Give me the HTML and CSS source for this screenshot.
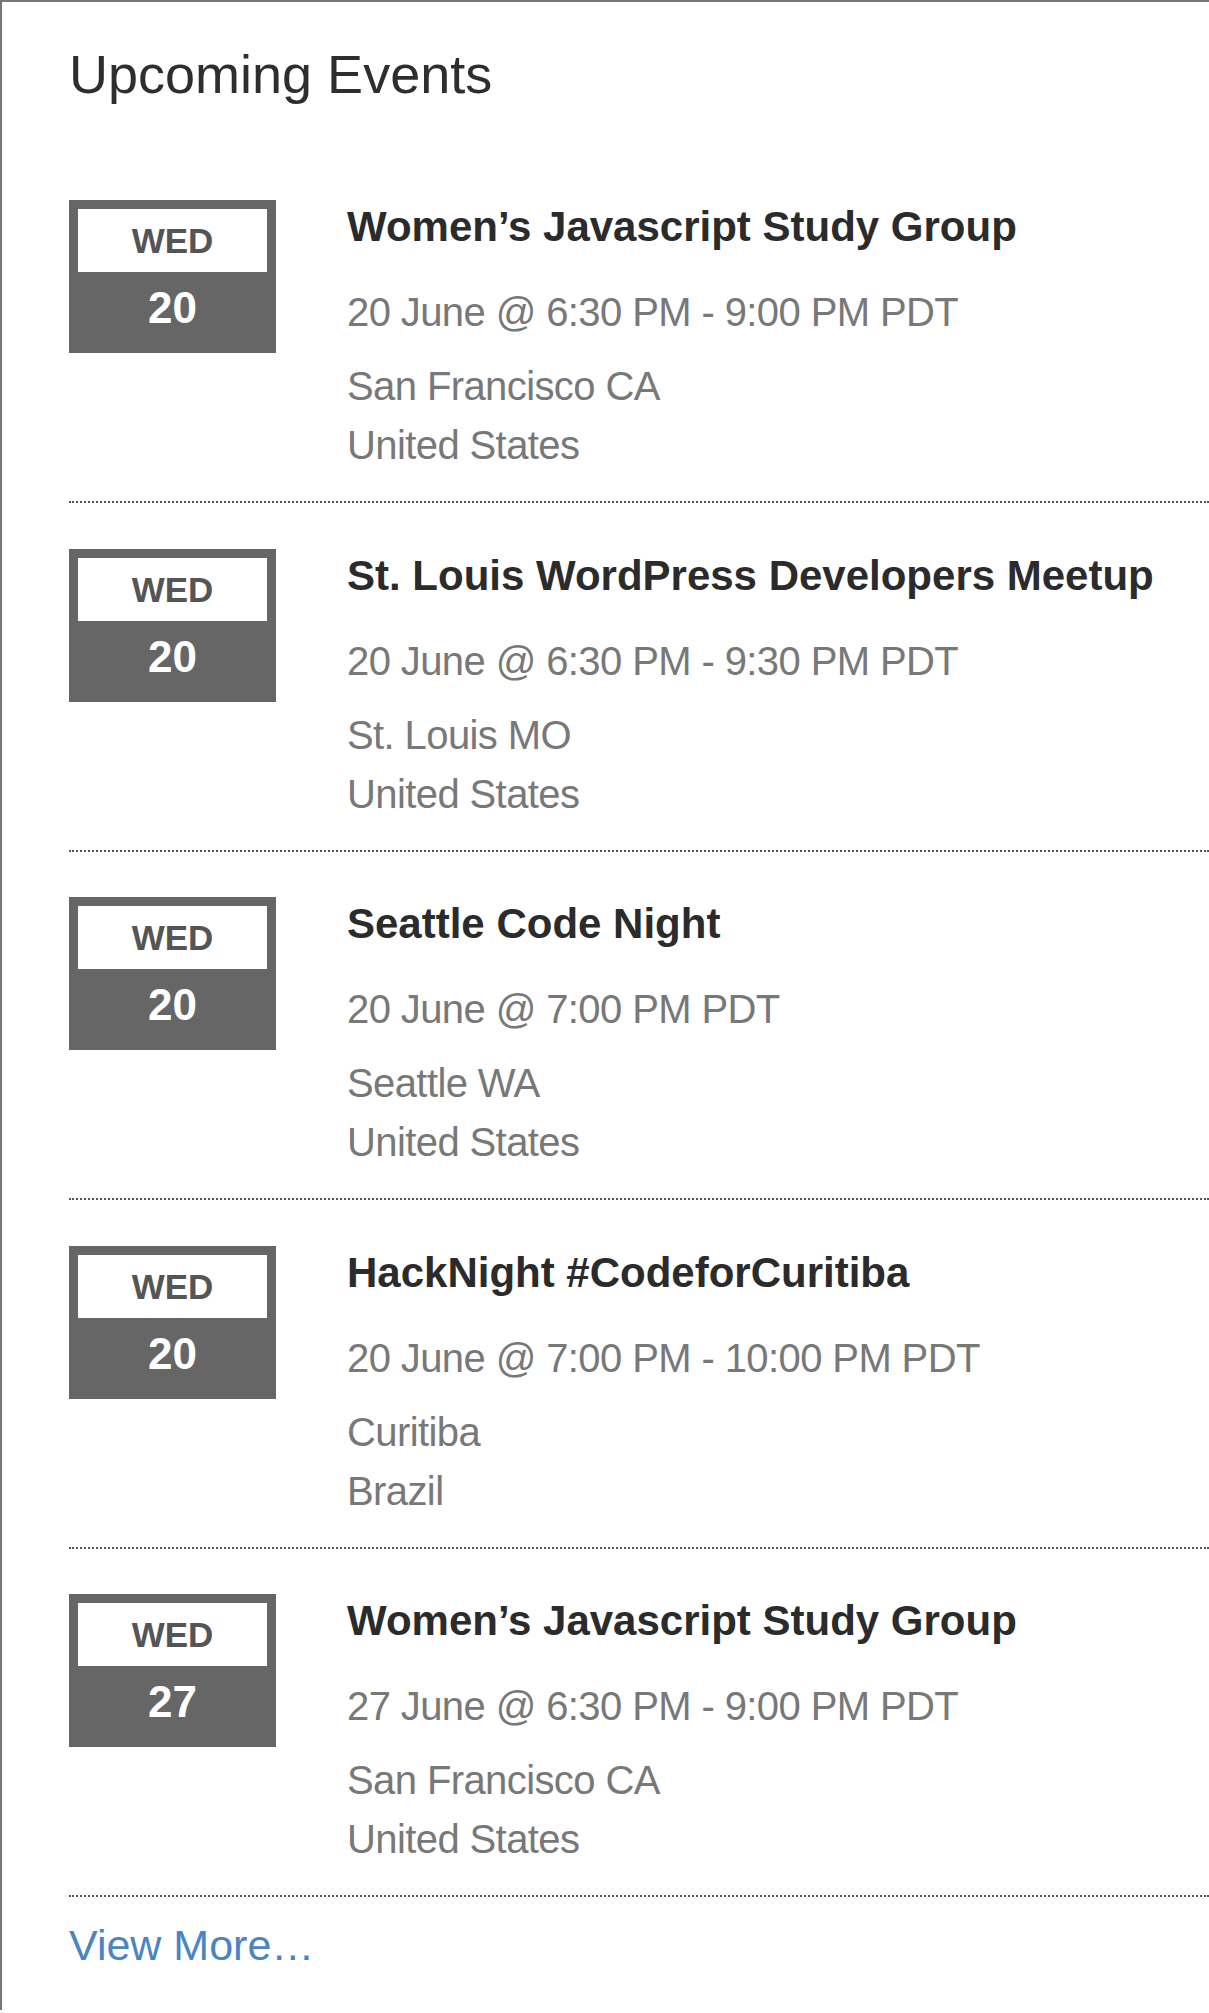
FILE: index.html
```
<!DOCTYPE html>
<html lang="en">
<head>
  <meta charset="UTF-8" />
  <meta name="viewport" content="width=device-width, initial-scale=1.0"/>
  <title>upcoming events</title>
  <link rel="stylesheet" href="styles.css">
</head>
<body>
  <section class="events-widget">
    <h2>Upcoming Events</h2>

    <ul class="event-list">
      <li class="event">
        <div class="event-date">
          <span class="weekday">WED</span>
          <span class="day">20</span>
        </div>
        <div class="event-info">
          <h3>Women’s Javascript Study Group</h3>
          <p class="event-time">20 June @ 6:30 PM - 9:00 PM PDT</p>
          <p class="event-place">San Francisco CA<br>United States</p>
        </div>
      </li>

      <li class="event">
        <div class="event-date">
          <span class="weekday">WED</span>
          <span class="day">20</span>
        </div>
        <div class="event-info">
          <h3>St. Louis WordPress Developers Meetup</h3>
          <p class="event-time">20 June @ 6:30 PM - 9:30 PM PDT</p>
          <p class="event-place">St. Louis MO<br>United States</p>
        </div>
      </li>

      <li class="event">
        <div class="event-date">
          <span class="weekday">WED</span>
          <span class="day">20</span>
        </div>
        <div class="event-info">
          <h3>Seattle Code Night</h3>
          <p class="event-time">20 June @ 7:00 PM PDT</p>
          <p class="event-place">Seattle WA<br>United States</p>
        </div>
      </li>

      <li class="event">
        <div class="event-date">
          <span class="weekday">WED</span>
          <span class="day">20</span>
        </div>
        <div class="event-info">
          <h3>HackNight #CodeforCuritiba</h3>
          <p class="event-time">20 June @ 7:00 PM - 10:00 PM PDT</p>
          <p class="event-place">Curitiba<br>Brazil</p>
        </div>
      </li>

      <li class="event">
        <div class="event-date">
          <span class="weekday">WED</span>
          <span class="day">27</span>
        </div>
        <div class="event-info">
          <h3>Women’s Javascript Study Group</h3>
          <p class="event-time">27 June @ 6:30 PM - 9:00 PM PDT</p>
          <p class="event-place">San Francisco CA<br>United States</p>
        </div>
      </li>
    </ul>

    <a href="#" class="view-more">View More…</a>
  </section>
</body>
</html>
```

FILE: styles.css
```
body {
  margin: 0;
  background: #fff;
  font-family: "Liberation Sans", Arial, Helvetica, sans-serif;
  color: #333;
}

.events-widget {
  border-top: 2px solid #777;
  border-left: 2px solid #777;
  padding: 0 0 40px 67px;
}

.events-widget h2 {
  font-size: 54px;
  font-weight: normal;
  line-height: 64px;
  margin: 40px 0 48.5px;
  color: #2e2e2e;
}

.event-list {
  list-style: none;
  margin: 0;
  padding: 0;
}

.event {
  display: flex;
  align-items: flex-start;
  gap: 71px;
  padding: 45.5px 0 26px;
  border-bottom: 2px dotted #555;
}

.event-date {
  flex-shrink: 0;
  width: 207px;
  box-sizing: border-box;
  padding: 9px;
  background: #666;
  text-align: center;
  font-weight: bold;
}

.event-date .weekday {
  display: block;
  height: 63px;
  line-height: 63px;
  background: #fff;
  color: #555;
  font-size: 35px;
}

.event-date .day {
  display: block;
  padding: 6px 0;
  line-height: 60px;
  color: #fff;
  font-size: 44px;
}

.event-info h3 {
  margin: 2px 0 32px;
  font-size: 42px;
  line-height: 50px;
  font-weight: bold;
  color: #2b2b2b;
}

.event-info p {
  margin: 0;
  font-size: 40px;
  line-height: 57px;
  letter-spacing: -0.6px;
  color: #787878;
}

.event-info .event-time {
  margin-bottom: 16px;
}

.event-info .event-place {
  line-height: 59px;
}

.view-more {
  display: inline-block;
  margin-top: 23px;
  font-size: 43px;
  line-height: 50px;
  color: #4a84c4;
  text-decoration: none;
}
```
